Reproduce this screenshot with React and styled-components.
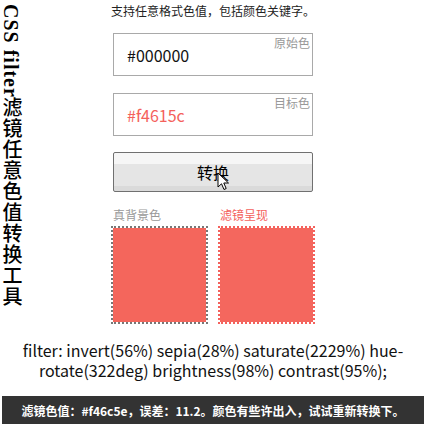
import React from "react";
import styled, { createGlobalStyle } from "styled-components";

const GlobalStyle = createGlobalStyle`
  * { box-sizing: border-box; }
  body {
    margin: 0;
    background: #fff;
    font-family: "Noto Sans CJK SC", "Noto Sans", sans-serif;
    color: #333;
  }
`;

const Top = styled.div`
  display: grid;
  grid-template-columns: 22px 1fr 22px;
`;

const Title = styled.h1`
  margin: 0;
  padding: 4px 0 0 1px;
  writing-mode: vertical-rl;
  font-family: "Liberation Serif", "Noto Sans CJK SC", serif;
  font-size: 20px;
  line-height: 22px;
  font-weight: bold;
  color: #000;
  letter-spacing: 1px;
`;

const TitleCjk = styled.span`
  font-weight: 500;
`;

const Main = styled.div`
  width: 204px;
  margin: 0 auto;
  font-size: 12px;
`;

const Tip = styled.p`
  margin: 0;
  line-height: 22px;
  color: #222;
  text-align: center;
`;

const Field = styled.div`
  position: relative;
  width: 200px;
  height: 43px;
  margin: ${(p) => p.$mt}px auto 0;
  border: 1px solid #a9a9a9;
  display: flex;
  align-items: center;
  padding-left: 13px;
`;

const FieldValue = styled.span`
  font-size: 16px;
  color: ${(p) => p.$color};
`;

const FieldLabel = styled.span`
  position: absolute;
  top: 2px;
  right: 2px;
  font-size: 12px;
  line-height: 14px;
  color: #999;
`;

const Button = styled.button`
  position: relative;
  display: block;
  width: 200px;
  height: 40px;
  margin: 16px auto 0;
  border: 1px solid #707070;
  border-radius: 2px;
  background: linear-gradient(
    to bottom,
    #f6f6f6 0%,
    #f6f6f6 28%,
    #e5e5e5 29%,
    #e5e5e5 86%,
    #dadada 87%,
    #dadada 100%
  );
  font-family: "Noto Sans CJK SC", sans-serif;
  font-size: 16px;
  color: #000;
  padding: 0;
`;

const Cursor = styled.svg`
  position: absolute;
  left: 103px;
  top: 19px;
`;

const Swatches = styled.div`
  display: grid;
  grid-template-columns: 97px 97px;
  justify-content: space-between;
  margin-top: 14px;
`;

const SwatchLabel = styled.div`
  line-height: 18px;
  font-size: 12px;
  padding-left: 2px;
  color: ${(p) => p.$color};
`;

const Swatch = styled.div`
  margin-top: 2px;
  height: 98px;
  border: 2px dotted ${(p) => p.$border};
  background: ${(p) => p.$bg};
  background-clip: padding-box;
`;

const FilterText = styled.p`
  margin: 16px 0 0;
  padding: 0 12px;
  text-align: center;
  font-size: 16px;
  line-height: 20px;
  color: #111;
`;

const Footer = styled.div`
  margin: 16px 2px 0;
  height: 28px;
  background: #333;
  color: #fff;
  font-size: 12px;
  font-weight: bold;
  display: flex;
  align-items: center;
  justify-content: center;
`;

const App = () => (
  <>
    <GlobalStyle />
    <Top>
      <Title>
        CSS filter<TitleCjk>滤镜任意色值转换工具</TitleCjk>
      </Title>
      <Main>
        <Tip>支持任意格式色值，包括颜色关键字。</Tip>
        <Field $mt={11}>
          <FieldValue $color="#111">#000000</FieldValue>
          <FieldLabel>原始色</FieldLabel>
        </Field>
        <Field $mt={17}>
          <FieldValue $color="#f4615c">#f4615c</FieldValue>
          <FieldLabel>目标色</FieldLabel>
        </Field>
        <Button>
          转换
          <Cursor width="14" height="20" viewBox="0 0 14 20">
            <path
              d="M1 1 L1 15 L4.5 11.8 L7 17.5 L9.2 16.5 L6.8 11 L11.5 11 Z"
              fill="#fff"
              stroke="#000"
              strokeWidth="1"
              strokeLinejoin="round"
            />
          </Cursor>
        </Button>
        <Swatches>
          <div>
            <SwatchLabel $color="#999">真背景色</SwatchLabel>
            <Swatch $border="#777" $bg="#f4665c" />
          </div>
          <div>
            <SwatchLabel $color="#f4615c">滤镜呈现</SwatchLabel>
            <Swatch $border="#f4615c" $bg="#f4675e" />
          </div>
        </Swatches>
      </Main>
      <div />
    </Top>
    <FilterText>
      filter: invert(56%) sepia(28%) saturate(2229%) hue-rotate(322deg)
      brightness(98%) contrast(95%);
    </FilterText>
    <Footer>滤镜色值：#f46c5e，误差：11.2。颜色有些许出入，试试重新转换下。</Footer>
  </>
);

export default App;
